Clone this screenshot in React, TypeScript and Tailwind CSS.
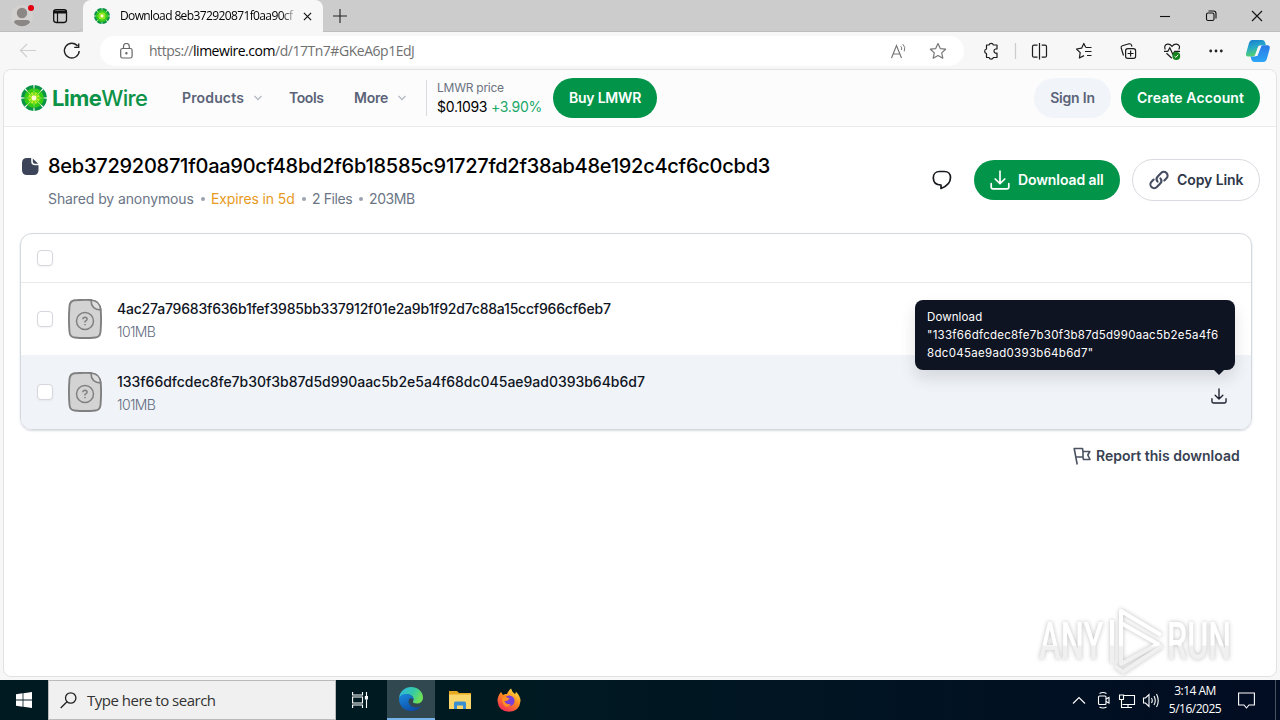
import React from "react";

const UI = "font-['Open_Sans','Noto_Sans',sans-serif]";

const wedges = [0, 45, 90, 135, 180, 225, 270, 315];

function Lime({ className }: { className: string }) {
  return (
    <svg viewBox="0 0 26 26" className={className}>
      <circle cx="13" cy="13" r="10.5" fill="#e4f9a0" />
      {wedges.map((a) => (
        <g key={a} transform={`rotate(${a + 22.5} 13 13)`}>
          <path d="M8.7 .8 A13 13 0 0 1 17.3 .8 L15.6 6 Q13 4.6 10.4 6Z" fill="#0a9446" />
          <path d="M9.7 3.8 Q13 2.6 16.3 3.8 L14 10.4 Q13 11 12 10.4Z" fill="#35cc14" />
          <path d="M11.6 7.4 Q13 6.8 14.4 7.4 L13.3 12 H12.7Z" fill="#b9ee1e" />
        </g>
      ))}
      <circle cx="13" cy="13" r="2.4" fill="#fffcd8" />
    </svg>
  );
}

function Chevron() {
  return (
    <svg viewBox="0 0 10 6" className="h-[6px] w-[10px]" fill="none" stroke="#b4bac4" strokeWidth="1.3">
      <path d="M1.5 1 L5 4.5 L8.5 1" />
    </svg>
  );
}

function TabStrip() {
  return (
    <div className="flex h-8 bg-[#cccccc]">
      <div className="flex w-[83px] rounded-br-md border-b border-[#bdbdbd]">
        <svg viewBox="0 0 83 32" className="h-8 w-[83px]">
          <circle cx="22" cy="16" r="11" fill="#d3d1cf" />
          <circle cx="22" cy="13" r="5.2" fill="#8b8785" />
          <path d="M14 22.5 Q14 20 17 20 H27 Q30 20 30 22.5 Q27 26.2 22 26.2 Q17 26.2 14 22.5Z" fill="#8b8785" />
          <circle cx="31" cy="8" r="3" fill="#e3000f" />
          <rect x="53.7" y="9.7" width="12.8" height="12.8" rx="2.4" fill="none" stroke="#111" strokeWidth="1.3" />
          <path d="M53.5 10.5 H67 V13.5 H53.5Z" fill="#111" />
          <path d="M57.5 13 V22" stroke="#111" strokeWidth="1.2" />
        </svg>
      </div>
      <div className="flex w-[240px] items-center rounded-t-lg bg-[#f7f7f7] pl-[11px]">
        <Lime className="h-4 w-4 shrink-0" />
        <div className={`ml-[10px] w-[176px] whitespace-nowrap bg-linear-to-r from-black from-90% to-[#dddddd] bg-clip-text text-xs tracking-[-0.62px] text-transparent ${UI}`}>
          Download 8eb372920871f0aa90cf
        </div>
        <svg viewBox="0 0 10 10" className="ml-[7px] h-[9px] w-[9px]" stroke="#111" strokeWidth="1.3">
          <path d="M1 1 L9 9 M9 1 L1 9" />
        </svg>
      </div>
      <div className="flex flex-1 items-center border-b border-[#bdbdbd] pl-[10px]">
        <svg viewBox="0 0 14 14" className="h-[14px] w-[14px]" stroke="#222" strokeWidth="1.1">
          <path d="M7 0 V14 M0 7 H14" />
        </svg>
      </div>
      <div className="flex w-[138px] border-b border-[#bdbdbd]">
        <svg viewBox="0 0 138 32" className="h-8 w-[138px]" fill="none" stroke="#111" strokeWidth="1.1">
          <path d="M18 16.5 H28" />
          <rect x="64.5" y="13" width="7.5" height="7.5" rx="1.6" />
          <path d="M66.5 11 H71.5 Q74 11 74 13.5 V18.5" />
          <path d="M110 11 L120 21 M120 11 L110 21" />
        </svg>
      </div>
    </div>
  );
}

function Toolbar() {
  return (
    <div className="flex h-[37px] items-center bg-[#f7f7f7]">
      <svg viewBox="0 0 100 37" className="h-[37px] w-[100px]" fill="none">
        <path d="M36 18.5 H20.5 M27 12 L20.5 18.5 L27 25" stroke="#cfcfcf" strokeWidth="1.2" />
        <path d="M77.6 14 A7.4 7.4 0 1 0 79.2 19 M78.7 11.4 V15.4 H74.2" stroke="#222" strokeWidth="1.4" />
      </svg>
      <div className="flex h-[30px] w-[864px] items-center rounded-full bg-white pl-5">
        <svg viewBox="0 0 13 16" className="h-4 w-[13px]" fill="none" stroke="#666" strokeWidth="1.2">
          <rect x=".7" y="5.5" width="11.4" height="9.5" rx="1.8" />
          <path d="M3.5 5.5 V3.4 A2.9 2.9 0 0 1 9.3 3.4 V5.5" />
          <circle cx="6.4" cy="10.3" r=".6" fill="#666" />
        </svg>
        <div className={`ml-4 w-[741px] whitespace-nowrap text-sm tracking-[-0.47px] text-[#707070] ${UI}`}>
          https://<span className="text-black">limewire.com</span>/d/17Tn7#GKeA6p1EdJ
        </div>
        <svg viewBox="0 0 60 20" className="h-5 w-[60px]" fill="none" stroke="#777" strokeWidth="1.2">
          <path d="M1.5 17 L6.5 4.5 L11.5 17 M3.2 13 H9.8" />
          <path d="M10.8 5.2 Q12.2 6.8 11.5 9 M12.8 3.2 Q16 6 14.2 10.4" strokeWidth="1" />
          <path d="M48 2.6 L50.3 7.6 L55.6 8.2 L51.7 11.9 L52.8 17.2 L48 14.5 L43.2 17.2 L44.3 11.9 L40.4 8.2 L45.7 7.6Z" strokeLinejoin="round" />
        </svg>
      </div>
      <svg viewBox="964 32 316 37" className="h-[37px] w-[316px]" fill="none" stroke="#1c1c1c" strokeWidth="1.2">
        <path d="M986.5 45 H989 A2.3 2.3 0 0 1 993.4 45 H997 V49 H995.5 A2.2 2.2 0 0 0 995.5 53.2 H997 V57.5 H993.4 A2.3 2.3 0 0 1 989 57.5 H986.5 V53.5 A2.3 2.3 0 0 1 986.5 49Z" strokeLinejoin="round" />
        <path d="M1015.5 43 V59" stroke="#cccccc" />
        <path d="M1037.5 45.2 H1034 Q1032.5 45.2 1032.5 46.7 V55.7 Q1032.5 57.2 1034 57.2 H1037.5 M1039.5 43 V59.5 M1041.7 45.2 H1045 Q1046.5 45.2 1046.5 46.7 V55.7 Q1046.5 57.2 1045 57.2 H1041.7" />
        <path d="M1085.8 47.5 L1083.8 43.5 L1081.6 48.2 L1076.5 49 L1080.2 52.6 L1079.4 58 L1084 55.6 M1086 47.5 H1091.5 M1085 51.5 H1091.5 M1087 55.5 H1091.5" strokeLinejoin="round" />
        <rect x="1125.6" y="48.6" width="10" height="9.8" rx="2.2" />
        <path d="M1130.6 50.5 V56.5 M1127.6 53.5 H1133.6 M1123.5 55.5 L1121.2 48 Q1120.8 46.4 1122.4 45.8 L1129 43.8 Q1131 43.4 1131.6 45.4 L1131.9 46.6" />
        <path d="M1165.2 49.5 Q1163.6 45.2 1167.4 44.2 Q1170 43.8 1172 46.3 Q1174 43.8 1176.8 44.2 Q1181 45.4 1178.8 49.5 M1164 51.3 H1167.8 L1169.8 47.8 L1172.8 54.3 L1174.8 51.3 H1180 M1166.5 53.2 L1171.8 58.2" />
        <circle cx="1176.3" cy="56" r="3.9" fill="#13821b" stroke="none" />
        <path d="M1174.5 56.2 L1175.8 57.4 L1178.2 54.8" stroke="#fff" strokeWidth="1" />
        <g fill="#222" stroke="none">
          <circle cx="1210.7" cy="51" r="1.4" /><circle cx="1216" cy="51" r="1.4" /><circle cx="1221.3" cy="51" r="1.4" />
        </g>
        <defs>
          <linearGradient id="cpa" x1="0" y1="0" x2="0.3" y2="1"><stop offset="0" stopColor="#1579cf" /><stop offset=".5" stopColor="#27a8c8" /><stop offset="1" stopColor="#56d46b" /></linearGradient>
          <linearGradient id="cpb" x1="0" y1="0" x2="0" y2="1"><stop offset="0" stopColor="#2a78e4" /><stop offset="1" stopColor="#2aa6f6" /></linearGradient>
        </defs>
        <g stroke="none">
          <path d="M1252 40 H1262 Q1264.5 40 1265.3 43 L1266 45.2 H1261 Q1258.5 45.2 1257.8 47.5 L1255.7 54.5 Q1255 56.5 1252.5 56.5 H1248 Q1245.3 56.5 1246.2 53 L1249 43 Q1250 40 1252 40Z" fill="url(#cpa)" />
          <path d="M1263 45.2 H1267.5 Q1270.5 45.2 1269.6 49 L1267 58.5 Q1266 62 1263 62 H1254.5 Q1252 62 1251.2 59 L1250.5 56.5 H1254.5 Q1257 56.5 1257.8 54 L1260 47 Q1260.6 45.2 1263 45.2Z" fill="url(#cpb)" />
          <path d="M1258.6 46 H1261.4 L1257.4 56 H1254.6Z" fill="#f7f7f7" />
        </g>
      </svg>
    </div>
  );
}

function SiteHeader() {
  return (
    <header className="flex h-[57px] items-center border-b border-[#ececee] bg-[#fcfcfc] text-sm font-semibold text-[#5a6377]">
      <Lime className="ml-[17px] h-[26px] w-[26px]" />
      <div className="ml-[5px] w-[130px] whitespace-nowrap text-[22px] leading-7 font-bold tracking-[-0.6px] text-[#0c9347]">
        Lime<span className="font-medium">Wire</span>
      </div>
      <nav className="flex w-[244px] items-center whitespace-nowrap">
        <div className="flex w-[107px] items-center"><span className="w-[71px] tracking-[0.15px]">Products</span><Chevron /></div>
        <div className="w-[65px] tracking-[-0.4px]">Tools</div>
        <div className="flex items-center"><span className="w-[43px] tracking-[-0.2px]">More</span><Chevron /></div>
      </nav>
      <div className="h-9 w-[127px] border-l border-[#d8dae0] pl-[10px] whitespace-nowrap font-normal">
        <div className="text-xs leading-4 tracking-[-0.25px] text-[#6b7280]">LMWR price</div>
        <div className="text-sm leading-[21px] tracking-[-0.27px] text-black">$0.1093 <span className="text-[#20a868]">+3.90%</span></div>
      </div>
      <button className="h-10 w-[104px] rounded-full bg-[#02954a] tracking-[-0.2px] text-white">Buy LMWR</button>
      <button className="ml-[377px] h-10 w-[77px] rounded-full bg-[#f1f4f9] tracking-[-0.2px]">Sign In</button>
      <button className="ml-[10px] h-10 w-[139px] rounded-full bg-[#02954a] whitespace-nowrap tracking-[0.12px] text-white">Create Account</button>
    </header>
  );
}

function DownloadIcon({ className }: { className: string }) {
  return (
    <svg viewBox="0 0 20 20" className={className} fill="none" stroke="currentColor" strokeWidth="1.7" strokeLinecap="round" strokeLinejoin="round">
      <path d="M10 1.2 V13.5 M5.2 9 L10 13.7 L14.8 9 M1.2 13.5 V17 Q1.2 18.8 3 18.8 H17 Q18.8 18.8 18.8 17 V13.5" />
    </svg>
  );
}

function Dot() {
  return <span className="mr-[6px] ml-[7px] h-1 w-1 rounded-full bg-[#9ca3af]" />;
}

function TitleBlock() {
  return (
    <div className="flex h-[106px] pl-[18px]">
      <svg viewBox="0 0 17 17" className="mt-[31px] h-[17px] w-[17px]" fill="#3b4459">
        <path d="M5 0 H9.2 V3.4 Q9.2 7.2 13 7.2 H16.5 V12 Q16.5 17 11.7 17 H5 Q0 17 0 12 V5 Q0 0 5 0Z" />
        <path d="M10.8 .4 L16.2 5.7 H13 Q10.8 5.7 10.8 3.4Z" />
      </svg>
      <div className="ml-[9px] w-[884px] whitespace-nowrap pt-[25px]">
        <h1 className="text-xl leading-[28px] font-medium tracking-[-0.25px] text-black">8eb372920871f0aa90cf48bd2f6b18585c91727fd2f38ab48e192c4cf6c0cbd3</h1>
        <div className="mt-[9px] flex items-center text-sm leading-5 text-[#6b7586]">
          <span className="w-[146px] tracking-[-0.1px]">Shared by anonymous</span><Dot />
          <span className="w-[84px] tracking-[-0.12px] text-[#e79a1d]">Expires in 5d</span><Dot />
          <span className="w-10 tracking-[-0.4px]">2 Files</span><Dot />
          <span className="tracking-[-0.4px]">203MB</span>
        </div>
      </div>
      <div className="mt-8 flex h-[42px] items-center text-sm font-semibold">
        <svg viewBox="0 0 20 20" className="h-5 w-5" fill="none" stroke="#16181d" strokeWidth="1.7" strokeLinejoin="round">
          <path d="M9 15 V18.5 C13 17 18.5 13.5 18.5 7.5 C18.5 3.5 16 1.5 12.5 1.5 H7.5 C3.8 1.5 1.3 4 1.3 7.8 C1.3 12.5 4.5 15 9 15Z" />
        </svg>
        <button className="ml-[22px] flex h-10 w-[146px] items-center gap-2 rounded-full bg-[#02954a] pl-4 whitespace-nowrap tracking-[-0.1px] text-white">
          <DownloadIcon className="h-5 w-5" />Download all
        </button>
        <button className="ml-3 flex h-[42px] w-[128px] items-center gap-2 rounded-full border border-[#d9dbe0] pl-4 whitespace-nowrap tracking-[-0.08px] text-[#2e3648]">
          <svg viewBox="0 0 24 24" className="h-5 w-5" fill="none" stroke="#454d60" strokeWidth="2.5" strokeLinecap="round">
            <path d="M10.3 14 A4.6 4.6 0 0 1 10.5 7.8 L14.6 3.6 A4.5 4.5 0 0 1 21 10 L18.4 12.6" />
            <path d="M13.7 10 A4.6 4.6 0 0 1 13.5 16.2 L9.4 20.4 A4.5 4.5 0 0 1 3 14 L5.6 11.4" />
          </svg>
          Copy Link
        </button>
      </div>
    </div>
  );
}

function Checkbox() {
  return <span className="h-4 w-4 shrink-0 rounded-[4px] border border-[#d5d7dc] bg-white shadow-xs" />;
}

function FileRow({ name, tracking, hover, children }: { name: string; tracking: string; hover?: boolean; children?: React.ReactNode }) {
  return (
    <div className={`flex items-center pl-4 ${hover ? "relative h-[74px] rounded-b-[11px] bg-[#f0f3f7]" : "h-[72px]"}`}>
      <Checkbox />
      <svg viewBox="0 0 34 40" className="ml-[15px] h-10 w-[34px]" fill="none" stroke="#808080" strokeWidth="1.9">
        <path d="M6.5 1.3 Q17 .3 23 1 L32.6 10 Q33.6 20 32.5 33 Q32 38 27.5 38.5 Q17 39.6 6.5 38.5 Q2 38 1.5 33 Q.4 20 1.5 7 Q2 2 6.5 1.3Z" fill="#d3d3d3" />
        <path d="M23 1 Q23 10.5 32.6 11 Q32.6 2 23 1Z" fill="#dedede" strokeWidth="1.6" />
        <circle cx="17" cy="22" r="8.5" strokeWidth="1.5" />
        <path d="M14.8 20.3 Q15 18.3 17 18.3 Q19.2 18.4 19.1 20.2 Q19 21.4 17 22.4 V23.4 M17 25 V26.2" strokeWidth="1.5" />
      </svg>
      <div className="ml-[15px] whitespace-nowrap pt-[2px] text-sm">
        <div className={`leading-6 font-medium text-[#0f1423] ${tracking}`}>{name}</div>
        <div className="leading-[22px] font-light tracking-[-0.6px] text-[#5f6b80]">101MB</div>
      </div>
      {children}
    </div>
  );
}

function Tooltip() {
  return (
    <div className="absolute right-[16px] bottom-[59px] z-10 h-[70px] w-80 rounded-lg bg-[#0f1423] px-3 py-2 text-[11.5px] leading-[18px] whitespace-nowrap text-white shadow-[0_8px_16px_rgba(15,20,35,0.12)]">
      <div className="tracking-[0.1px]">Download</div>
      <div className="tracking-[0.27px]">"133f66dfcdec8fe7b30f3b87d5d990aac5b2e5a4f6</div>
      <div className="tracking-[0.3px]">8dc045ae9ad0393b64b6d7"</div>
      <svg viewBox="0 0 10 5" className="absolute right-[11px] bottom-[-5px] h-[5px] w-[10px]" fill="#0f1423"><path d="M0 0 H10 L5 5Z" /></svg>
    </div>
  );
}

function FileCard() {
  return (
    <div className="ml-4 h-[197px] w-[1232px] rounded-xl border border-[#d3d7de] shadow-[0_1px_2px_rgba(40,60,90,0.18)]">
      <div className="flex h-[49px] items-center border-b border-[#e8eaee] pl-4"><Checkbox /></div>
      <FileRow name="4ac27a79683f636b1fef3985bb337912f01e2a9b1f92d7c88a15ccf966cf6eb7" tracking="tracking-[-0.2px]" />
      <FileRow name="133f66dfcdec8fe7b30f3b87d5d990aac5b2e5a4f68dc045ae9ad0393b64b6d7" tracking="tracking-[-0.02px]" hover>
        <DownloadIcon className="mt-2 mr-6 ml-auto h-4 w-4 text-[#1c2230]" />
        <Tooltip />
      </FileRow>
    </div>
  );
}

function Watermark() {
  return (
    <svg viewBox="0 0 210 70" className="absolute right-[39px] bottom-0 h-[70px] w-[210px] font-['Roboto',sans-serif] drop-shadow-[0_0_2px_rgba(0,0,0,0.26)]">
      <defs>
        <linearGradient id="wm" x1="0" y1="0" x2="0" y2="1"><stop offset=".55" stopColor="#ffffff" /><stop offset=".58" stopColor="#f0f0f0" /></linearGradient>
      </defs>
      <g fill="url(#wm)" fontSize="52" fontWeight="500">
        <text transform="translate(12 53) scale(.63 1)">ANY</text>
        <text transform="translate(140 53) scale(.62 1)">RUN</text>
      </g>
      <g fill="none" stroke="url(#wm)" strokeWidth="4" strokeLinejoin="round">
        <path d="M94 17 L131 38 L94 58Z" />
        <path d="M85 14 V57 M94 17 V5 L134 29 M88 60 L96 66 L135 40" />
      </g>
    </svg>
  );
}

function Taskbar() {
  return (
    <div className={`flex h-10 bg-linear-to-r from-[#001a22] from-40% to-[#020c22] text-white ${UI}`}>
      <div className="flex w-12 items-center justify-center">
        <svg viewBox="0 0 16 16" className="h-4 w-4" fill="#fff"><path d="M0 2.2 L6.6 1.3 V7.6 H0Z M7.4 1.2 L16 0 V7.6 H7.4Z M0 8.4 H6.6 V14.7 L0 13.8Z M7.4 8.4 H16 V16 L7.4 14.8Z" /></svg>
      </div>
      <div className="flex w-72 items-center border border-[#b9bbbb] bg-[#f0f0f0] pl-[11px] text-[#333]">
        <svg viewBox="0 0 17 17" className="h-[17px] w-[17px]" fill="none" stroke="#222" strokeWidth="1.3"><circle cx="10.7" cy="6" r="5.2" /><path d="M7 9.8 L.7 16" /></svg>
        <span className="ml-[10px] whitespace-nowrap text-[15px] tracking-[-0.5px]">Type here to search</span>
      </div>
      <div className="flex w-[51px] items-center pl-4">
        <svg viewBox="0 0 16 16" className="h-4 w-4" fill="none" stroke="#fff" strokeWidth="1.1"><path d="M.6 0 V3 H10.5 V0 M.6 16 V13 H10.5 V16 M.6 5 H10.5 V11 H.6Z M14.5 0 V4 M14.5 7.5 V16" /><path d="M13.4 4.5 h2.4 v2.4 h-2.4Z" fill="#fff" /></svg>
      </div>
      <div className="flex w-12 items-center justify-center border-b-2 border-[#76b3e8] bg-[#314850]">
        <svg viewBox="0 0 24 24" className="h-6 w-6">
          <defs>
            <linearGradient id="eg" x1="0" y1="0" x2="1" y2=".4"><stop offset="0" stopColor="#2fb4e9" /><stop offset=".6" stopColor="#34c9a7" /><stop offset="1" stopColor="#6be05a" /></linearGradient>
            <linearGradient id="eb" x1="0" y1="0" x2=".6" y2="1"><stop offset="0" stopColor="#1b8ade" /><stop offset="1" stopColor="#0c4ea8" /></linearGradient>
          </defs>
          <path d="M0 11 C1 4 6 0 12 0 C19 0 24 5 24 10.5 C24 14.5 21 16.5 18 16.5 C15 16.5 13.5 15.5 14 14.5 C15.5 12 14 8 9.5 7.5 C5 7 1 9 0 11Z" fill="url(#eg)" />
          <path d="M0 12 C0 8.8 4 6.6 8 7 C12 7.2 15 10 14.5 13 C13.6 11.5 12 10.8 10.8 11.5 C8 14 10 20.5 17 20.5 C19.5 20.5 21 19.5 22 19 C20 22.4 16.5 24 12 24 C5 24 0 18.5 0 12Z" fill="url(#eb)" />
        </svg>
      </div>
      <div className="flex w-[98px] items-center gap-[26px] pl-[14px]">
        <svg viewBox="0 0 22 20" className="h-5 w-[22px]"><path d="M0 1 H8 L10 3 H22 V19 H0Z" fill="#e8a922" /><path d="M0 4.5 H22 V19 H0Z" fill="#fbd66b" /><path d="M5 19 V13 Q5 11.5 6.5 11.5 H15.5 Q17 11.5 17 13 V19 H14 V15.5 H8 V19Z" fill="#3a8fd0" /></svg>
        <svg viewBox="0 0 24 24" className="h-6 w-6">
          <defs><linearGradient id="ff" x1=".8" y1="0" x2=".2" y2="1"><stop offset="0" stopColor="#ffe545" /><stop offset=".45" stopColor="#ff8a1e" /><stop offset="1" stopColor="#f0245c" /></linearGradient></defs>
          <path d="M4 4 L6 7 Q8 5.5 10 6 Q11.5 2.5 14 .5 Q15 4 18 6 Q19 5 18.7 3.5 Q23.5 8 23.5 13 Q22.5 23.5 12 23.7 Q1.5 23.5 .5 13 Q.5 8 4 4Z" fill="url(#ff)" />
          <circle cx="12.3" cy="12.8" r="5.3" fill="#7a3fd6" /><path d="M5 9.5 Q9 8 12.5 10.5 Q11 13.5 7.5 13 Q9 17 14 16 Q11 20.5 7 17.5 Q4.5 14 5 9.5Z" fill="#ff8f22" />
        </svg>
      </div>
      <svg viewBox="1060 680 100 40" className="ml-[527px] h-10 w-[100px]" fill="none" stroke="#fff" strokeWidth="1.1">
        <path d="M1073 703.5 L1079 697.5 L1085 703.5" />
        <rect x="1098.5" y="696" width="7.5" height="8.5" rx="1" /><path d="M1106 699 L1109 697.5 V703 L1106 701.5 M1099.5 693.5 Q1103 691.5 1106.5 693.5 M1099.5 707 Q1103 709 1106.5 707" />
        <path d="M1124 695.5 H1134.5 V704.5 H1122.5 M1128 704.5 V707.5 M1123.5 707.5 H1132 M1119.5 695 H1123.5 V699.5 H1119.5Z M1121.5 699.5 V707.5 H1124" />
        <path d="M1143.5 698 H1145.5 L1149 694.5 V706.5 L1145.5 703 H1143.5Z M1151.5 698 Q1153 700.5 1151.5 703 M1154 696 Q1156.5 700.5 1154 705 M1156.5 694 Q1160 700.5 1156.5 707" />
      </svg>
      <div className="w-[70px] pt-[2px] text-center text-xs leading-[18px] tracking-[-0.5px] whitespace-nowrap"><div>3:14 AM</div><div>5/16/2025</div></div>
      <div className="flex w-[46px] items-center justify-end border-r border-[#4a5260] pr-5">
        <svg viewBox="0 0 17 17" className="h-[17px] w-[17px] shrink-0" fill="none" stroke="#fff" strokeWidth="1.1"><path d="M.6 1 H16.4 V13 H11 L8.5 16 L6 13 H.6Z" /></svg>
      </div>
      <div className="w-1" />
    </div>
  );
}

export default function App() {
  return (
    <div className="flex h-[720px] w-[1280px] flex-col overflow-hidden bg-[#f7f7f7]">
      <TabStrip />
      <Toolbar />
      <main className="relative mx-[3px] mb-[3px] h-[608px] shrink-0 overflow-hidden rounded-lg border border-[#e2e2e2] bg-white font-['Inter',sans-serif]">
        <SiteHeader />
        <TitleBlock />
        <FileCard />
        <div className="mt-[14px] mr-9 flex items-center justify-end gap-[5px] text-sm leading-6 font-semibold text-[#384152]">
          <svg viewBox="0 0 18 18" className="h-[18px] w-[18px]" fill="none" stroke="#4b5362" strokeWidth="1.6" strokeLinejoin="round"><path d="M4.2 17.5 L1.2 1.5 H9.5 L10 4.5 H16.8 L14.8 8 L17 12.5 H10.5 L10 10 H3 M10 4.5 V10" /></svg>
          <span className="w-[144px] whitespace-nowrap">Report this download</span>
        </div>
        <Watermark />
      </main>
      <Taskbar />
    </div>
  );
}
